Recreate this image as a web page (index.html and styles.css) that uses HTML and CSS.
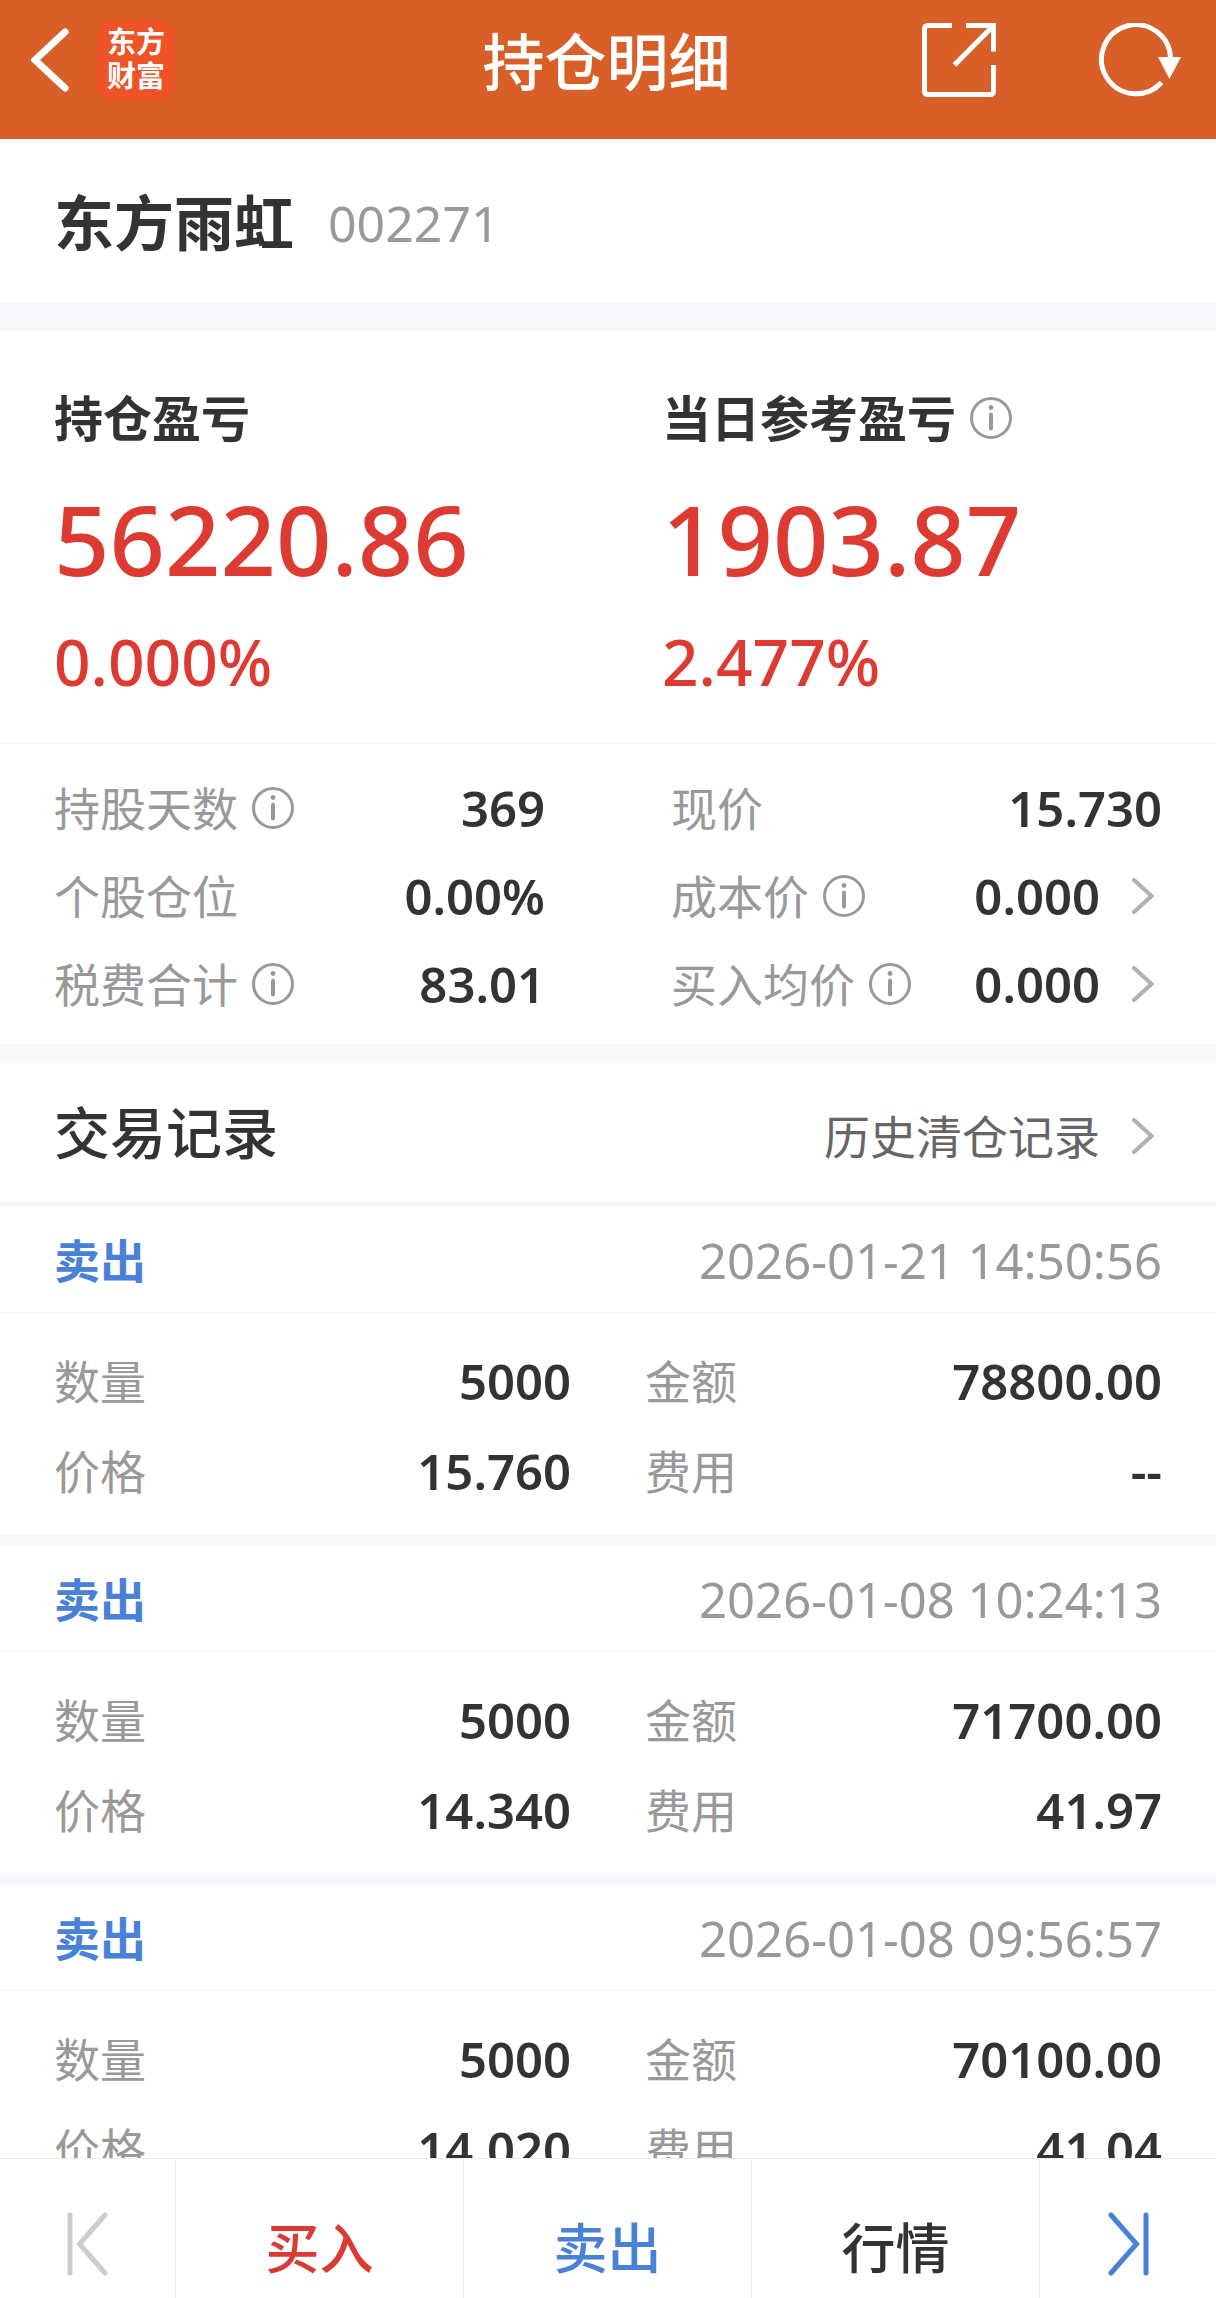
FILE: index.html
```html
<!DOCTYPE html>
<html lang="zh-CN">
<head>
  <meta charset="UTF-8">
  <meta name="viewport" content="width=device-width, initial-scale=1.0">
  <title>持仓明细</title>
  <link rel="stylesheet" href="styles.css">
</head>
<body>
  <!-- shared icons -->
  <svg class="sprite" aria-hidden="true">
    <symbol id="info" viewBox="0 0 42 42">
      <circle cx="21" cy="21" r="19.5" fill="none" stroke="currentColor" stroke-width="3"/>
      <circle cx="21" cy="10.5" r="2.4" fill="currentColor"/>
      <path d="M21 17.5V31.5" stroke="currentColor" stroke-width="4" stroke-linecap="round"/>
    </symbol>
    <symbol id="arrow" viewBox="0 0 22 36">
      <path d="M2 2L19.5 18L2 34" fill="none" stroke="currentColor" stroke-width="4" stroke-linecap="round"/>
    </symbol>
  </svg>

  <header class="header">
    <div class="header-left">
      <button class="icon-button" aria-label="返回">
        <svg width="38" height="64" viewBox="0 0 38 64"><path d="M34 4L4 32L34 60" fill="none" stroke="#fff" stroke-width="7" stroke-linecap="round"/></svg>
      </button>
      <a class="logo" href="#">东方<br>财富</a>
    </div>
    <h1>持仓明细</h1>
    <div class="header-right">
      <button class="icon-button" aria-label="分享">
        <svg width="74" height="74" viewBox="0 0 74 74" fill="none" stroke="#fff" stroke-width="5">
          <path d="M30 2.5H6Q2.5 2.5 2.5 6V68Q2.5 71.5 6 71.5H68Q71.5 71.5 71.5 68V42"/>
          <path d="M44 2.5H71.5V28.5M70 4L32.5 42"/>
        </svg>
      </button>
      <button class="icon-button" aria-label="刷新">
        <svg width="84" height="74" viewBox="0 0 84 74">
          <path d="M72.5 36A34.5 34.5 0 1 0 63.5 59.5" fill="none" stroke="#fff" stroke-width="5"/>
          <path d="M60 34H83L71.5 56Z" fill="#fff"/>
        </svg>
      </button>
    </div>
  </header>

  <main class="content">
    <section class="stock">
      <h2>东方雨虹</h2>
      <span class="code">002271</span>
    </section>

    <section class="summary">
      <div>
        <h3>持仓盈亏</h3>
        <p class="amount">56220.86</p>
        <p class="percent">0.000%</p>
      </div>
      <div>
        <h3>当日参考盈亏 <button class="info" aria-label="说明"><svg><use href="#info"/></svg></button></h3>
        <p class="amount">1903.87</p>
        <p class="percent">2.477%</p>
      </div>
    </section>

    <dl class="details">
      <div class="item">
        <dt>持股天数 <button class="info" aria-label="说明"><svg><use href="#info"/></svg></button></dt>
        <dd>369</dd>
      </div>
      <div class="item">
        <dt>现价</dt>
        <dd>15.730</dd>
      </div>
      <div class="item">
        <dt>个股仓位</dt>
        <dd>0.00%</dd>
      </div>
      <div class="item">
        <dt>成本价 <button class="info" aria-label="说明"><svg><use href="#info"/></svg></button></dt>
        <dd><a href="#">0.000 <svg class="arrow"><use href="#arrow"/></svg></a></dd>
      </div>
      <div class="item">
        <dt>税费合计 <button class="info" aria-label="说明"><svg><use href="#info"/></svg></button></dt>
        <dd>83.01</dd>
      </div>
      <div class="item">
        <dt>买入均价 <button class="info" aria-label="说明"><svg><use href="#info"/></svg></button></dt>
        <dd><a href="#">0.000 <svg class="arrow"><use href="#arrow"/></svg></a></dd>
      </div>
    </dl>

    <section class="trades">
      <div class="trades-title">
        <h2>交易记录</h2>
        <a href="#">历史清仓记录 <svg class="arrow"><use href="#arrow"/></svg></a>
      </div>

      <article class="record">
        <div class="record-head">
          <h3>卖出</h3>
          <time>2026-01-21 14:50:56</time>
        </div>
        <dl class="record-body">
          <div class="item"><dt>数量</dt><dd>5000</dd></div>
          <div class="item"><dt>金额</dt><dd>78800.00</dd></div>
          <div class="item"><dt>价格</dt><dd>15.760</dd></div>
          <div class="item"><dt>费用</dt><dd>--</dd></div>
        </dl>
      </article>

      <article class="record">
        <div class="record-head">
          <h3>卖出</h3>
          <time>2026-01-08 10:24:13</time>
        </div>
        <dl class="record-body">
          <div class="item"><dt>数量</dt><dd>5000</dd></div>
          <div class="item"><dt>金额</dt><dd>71700.00</dd></div>
          <div class="item"><dt>价格</dt><dd>14.340</dd></div>
          <div class="item"><dt>费用</dt><dd>41.97</dd></div>
        </dl>
      </article>

      <article class="record">
        <div class="record-head">
          <h3>卖出</h3>
          <time>2026-01-08 09:56:57</time>
        </div>
        <dl class="record-body">
          <div class="item"><dt>数量</dt><dd>5000</dd></div>
          <div class="item"><dt>金额</dt><dd>70100.00</dd></div>
          <div class="item"><dt>价格</dt><dd>14.020</dd></div>
          <div class="item"><dt>费用</dt><dd>41.04</dd></div>
        </dl>
      </article>
    </section>
  </main>

  <nav class="toolbar">
    <button class="prev" aria-label="上一个" disabled>
      <svg width="42" height="64" viewBox="0 0 42 64" fill="none" stroke="currentColor" stroke-width="5" stroke-linecap="round"><path d="M3 3V61M38 3L12.5 32L38 61"/></svg>
    </button>
    <button class="buy">买入</button>
    <button class="sell">卖出</button>
    <button class="quote">行情</button>
    <button class="next" aria-label="下一个">
      <svg width="42" height="64" viewBox="0 0 42 64" fill="none" stroke="currentColor" stroke-width="5" stroke-linecap="round"><path d="M39 3V61M4 3L29.5 32L4 61"/></svg>
    </button>
  </nav>
</body>
</html>
```
FILE: styles.css
```css
* { box-sizing: border-box; margin: 0; padding: 0; }
body { display: flex; flex-direction: column; height: 100vh; background-color: #fff; color: #333; font-family: "Noto Sans", "Noto Sans CJK SC", sans-serif; font-size: 46px; line-height: 60px; }
button { background: none; border: none; color: inherit; font: inherit; cursor: pointer; }
a { color: inherit; text-decoration: none; }
svg { display: block; }
.sprite { position: absolute; width: 0; height: 0; }

.header { display: grid; grid-template-columns: 1fr auto 1fr; align-items: center; flex: none; height: 139px; padding: 0 34px 19px 31px; background-color: #d86028; color: #fff; }
.header h1 { padding-top: 4px; font-size: 62px; font-weight: 500; }
.header-left, .header-right { display: flex; align-items: center; }
.header-left { gap: 28px; }
.header-right { justify-content: flex-end; gap: 102px; }
.logo { width: 78px; height: 80px; padding: 5px 0; border-radius: 16px; background-color: #ee5428; font-size: 29px; font-weight: 700; line-height: 34px; text-align: center; }

.content { flex: 1; min-height: 0; overflow-y: auto; scrollbar-width: none; }

.stock { display: flex; align-items: center; gap: 34px; height: 192px; padding: 4px 54px 0; border-bottom: 28px solid #f6f7fa; }
.stock h2 { font-size: 60px; font-weight: 700; }
.code { color: #999; font-size: 50px; }

.summary { display: grid; grid-template-columns: 1fr 1fr; gap: 108px; padding: 57px 54px 41px; border-bottom: 1px solid #f3f4f5; }
.summary h3 { display: flex; align-items: center; gap: 14px; font-size: 49px; font-weight: 700; }
.amount, .percent { color: #dd3a32; font-weight: 500; }
.amount { margin-top: 30px; font-size: 97px; line-height: 120px; }
.percent { margin-top: 24px; font-size: 64px; line-height: 80px; }
.info { color: #999; }
.info svg { width: 42px; height: 42px; }

.details { display: grid; grid-template-columns: 1fr 1fr; gap: 28px 126px; padding: 34px 54px 30px; border-bottom: 18px solid #f6f7fa; }
.item { display: flex; align-items: center; justify-content: space-between; }
dt { display: flex; align-items: center; gap: 14px; color: #999; }
dd { font-size: 49px; font-weight: 600; }
dd a, .trades-title a { display: flex; align-items: center; gap: 32px; }
.arrow { width: 22px; height: 36px; margin-right: 8px; color: #b0b0b0; }

.trades-title { display: flex; align-items: center; justify-content: space-between; height: 145px; padding: 0 54px; border-bottom: 5px solid #f7f8f9; }
.trades-title h2 { font-size: 56px; font-weight: 500; }
.trades-title a { padding-top: 8px; color: #666; }

.record { border-bottom: 11px solid #f6f7fa; }
.record-head { display: flex; align-items: center; justify-content: space-between; height: 106px; padding: 0 54px; border-bottom: 1px solid #f3f4f5; }
.record-head h3 { color: #4980d8; font-size: 46px; font-weight: 700; }
.record-head time { color: #999; font-size: 49px; }
.record-body { display: grid; grid-template-columns: 1fr 1fr; gap: 30px 74px; padding: 38px 54px 34px; }

.toolbar { display: grid; grid-template-columns: 176px 1fr 1fr 1fr 176px; flex: none; height: 140px; border-top: 1px solid #ebebeb; background-color: #fff; font-size: 54px; font-weight: 500; }
.toolbar button { display: flex; align-items: center; justify-content: center; padding-top: 38px; border-right: 1px solid #ebebeb; }
.toolbar button:last-child { border-right: none; }
.toolbar .prev, .toolbar .next { padding-top: 31px; }
.prev { color: #ccc; }
.buy { color: #d93a32; }
.sell, .next { color: #4980d8; }
```
